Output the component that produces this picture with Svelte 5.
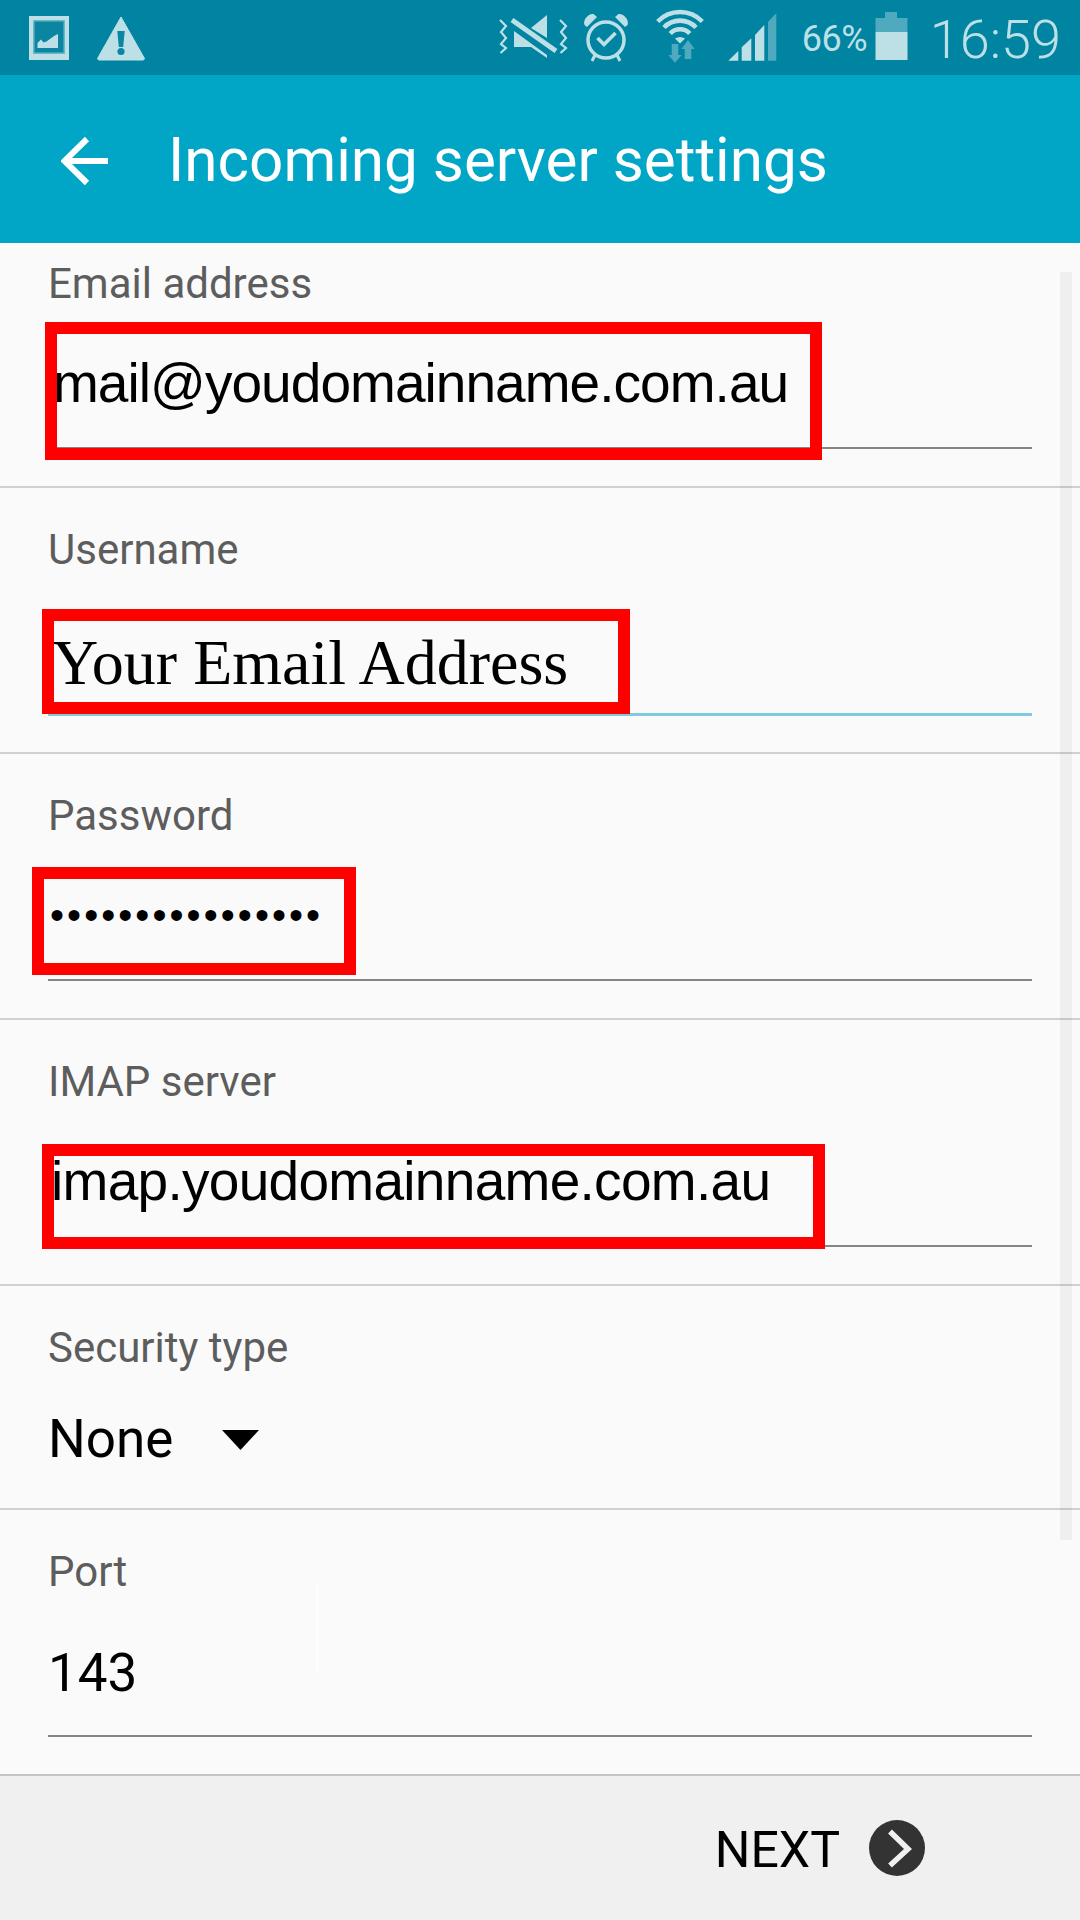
<script>
  const fields = [
    { label: 'Email address', value: 'mail@youdomainname.com.au', kind: 'sans', box: 'box-email', cls: 'first' },
    { label: 'Username', value: 'Your Email Address', kind: 'serif', box: 'box-user', cls: 'focus' },
    { label: 'Password', value: '••••••••••••••••', kind: 'dots', box: 'box-pass', cls: '' },
    { label: 'IMAP server', value: 'imap.youdomainname.com.au', kind: 'sans', box: 'box-imap', cls: 'imap' }
  ];
</script>

<div class="screen">
  <div class="status">
    <div class="status-left">
      <svg class="i-pic" viewBox="29 0 40 75" width="40" height="75">
        <rect x="29" y="16" width="40" height="44" fill="#bde0e7" />
        <rect x="34" y="21" width="30" height="32" fill="#0a86a2" stroke="#4fa9bf" stroke-width="1.5" />
        <path d="M37.500 48v-5l3.500-3.500 2.500 3 3-1 7.500-5.500 4-2v14z" fill="#bde0e7" />
      </svg>
      <svg class="i-warn" viewBox="97 0 48 75" width="48" height="75">
        <path d="M121 17 144.500 58.500 143.500 60H98.500L97.500 58.500z" fill="#bde0e7" stroke="#bde0e7" stroke-linejoin="round" />
        <path d="M117.300 31h7.400l-1.500 16h-4.400z" fill="#0a86a2" />
        <circle cx="121" cy="51.500" r="3.600" fill="#0a86a2" />
      </svg>
    </div>
    <div class="status-right">
      <svg class="i-mute" viewBox="499 0 71 75" width="71" height="75">
        <g fill="none" stroke="#bde0e7" stroke-width="2.200">
          <path d="M501 20l6 6-5 6 5 6-5 6 5 4-5.500 5" />
          <path d="M561 20l6 6-5 6 5 6-5 6 5 4-5.500 5" />
        </g>
        <path d="M532 28 548 15V38z" fill="#bde0e7" />
        <path d="M515 31 548 55V58L532 47H515z" fill="#bde0e7" />
        <path d="M513 20 557 51" stroke="#bde0e7" stroke-width="5" fill="none" />
      </svg>
      <svg class="i-alarm" viewBox="584 0 44 75" width="44" height="75">
        <circle cx="606" cy="40" r="18" fill="none" stroke="#bde0e7" stroke-width="3.500" />
        <path d="M584.500 25c-2-5 4-12 9-11l3.500 3-10 10z" fill="#bde0e7" />
        <path d="M627.500 25c2-5-4-12-9-11l-3.500 3 10 10z" fill="#bde0e7" />
        <path d="M595 55l-3 6M617 55l3 6" stroke="#bde0e7" stroke-width="3" />
        <path d="M597.500 38l6.500 6.500 11.500-11.500" fill="none" stroke="#bde0e7" stroke-width="3.600" />
      </svg>
      <svg class="i-wifi" viewBox="656 0 50 75" width="50" height="75">
        <g fill="none" stroke="#bde0e7" stroke-width="4.600">
          <path d="M658.700 21.500a31 31 0 0 1 44.600 0" />
          <path d="M665 27.500a22 22 0 0 1 32 0" />
          <path d="M671.200 33.500a13.500 13.500 0 0 1 19.600 0" />
        </g>
        <path d="M676 38.500q5-3 10 0l-5 5z" fill="#bde0e7" />
        <path d="M672.700 44h6.600v11h3.400l-6.700 7.700-6.700-7.700h3.400z" fill="#4fa9bf" />
        <path d="M685.700 59h6.600V49h3.400L689 40l-6.700 9h3.400z" fill="#4fa9bf" />
      </svg>
      <svg class="i-signal" viewBox="729 0 49 75" width="49" height="75">
        <path d="M729.300 60.700 739.300 51V60.700z" fill="#bde0e7" />
        <path d="M742.700 47.300 752.300 38.300V60.700H742.700z" fill="#bde0e7" />
        <path d="M756 35 765.300 25V60.700H756z" fill="#bde0e7" />
        <path d="M769 21.700 777.300 13.300V60.700H769z" fill="#4fa9bf" />
      </svg>
      <span class="pct">66%</span>
      <svg class="i-batt" viewBox="876 0 33 75" width="33" height="75">
        <path d="M886 12h12v6h10.500v14H876.500V18H886z" fill="#4fa9bf" />
        <rect x="876.500" y="32" width="32" height="28" fill="#bde0e7" />
      </svg>
      <span class="time">16:59</span>
    </div>
  </div>

  <header class="appbar">
    <svg class="back" viewBox="0 0 48 50" width="48" height="50">
      <path d="M47 25H4M26 3 3.500 25 26 47" fill="none" stroke="#fff" stroke-width="6" />
    </svg>
    <h1>Incoming server settings</h1>
  </header>

  <main class="form">
    {#each fields as f}
      <section class="row {f.cls}">
        <div class="label">{f.label}</div>
        <div class="field {f.kind}">{f.value}</div>
        <div class="redbox {f.box}"></div>
      </section>
    {/each}

    <section class="row security">
      <div class="label">Security type</div>
      <div class="select">
        <span>None</span>
        <svg viewBox="0 0 37 20" width="37" height="20"><path d="M0 0H37L18.500 20z" fill="#000" /></svg>
      </div>
    </section>

    <section class="row port">
      <div class="label">Port</div>
      <div class="field plain">143</div>
      <div class="hair"></div>
    </section>
    <div class="scrollbar"></div>
  </main>

  <footer class="bottom">
    <span class="next">NEXT</span>
    <svg viewBox="0 0 56 56" width="56" height="56">
      <circle cx="28" cy="28" r="28" fill="#333" />
      <path d="M21 11.500 39 29 21 45.500" fill="none" stroke="#f0f0f0" stroke-width="5.500" />
    </svg>
  </footer>
</div>

<style>
  :global(body) { margin: 0; background: #fafafa; }
  .screen { width: 1080px; height: 1920px; display: flex; flex-direction: column; overflow: hidden; font-family: Roboto, sans-serif; background: #fafafa; }

  .status { height: 75px; flex: none; background: #0084a1; display: flex; justify-content: space-between; }
  .status-left, .status-right { display: flex; align-items: flex-start; }
  .status-left { padding-left: 29px; }
  .status-right { padding-right: 19px; }
  .i-warn { margin-left: 28px; }
  .i-alarm { margin-left: 15px; }
  .i-wifi { margin-left: 27px; }
  .i-signal { margin-left: 23px; }
  .pct { margin: 2px 0 0 25px; width: 73px; font-size: 36px; line-height: 75px; color: #bde0e7; letter-spacing: -0.5px; }
  .time { margin: 2px 0 0 22px; font-size: 54px; font-weight: 300; line-height: 75px; color: #bde0e7; }

  .appbar { height: 168px; flex: none; background: #01a6c7; display: flex; align-items: center; padding-top: 4px; box-sizing: border-box; }
  .back { margin-left: 61px; flex: none; }
  h1 { margin: 0 0 0 59px; font-size: 60.2px; font-weight: 400; color: #fff; line-height: 1; }

  .form { position: relative; flex: 1; overflow: hidden; }
  .row { position: relative; height: 266px; box-sizing: border-box; border-bottom: 2px solid #d0d0d0; padding: 37px 0 0 48px; }
  .row.first { margin-top: -21px; }
  .label { font-size: 42px; line-height: 50px; color: #5d5d5d; }

  .field { margin-right: 48px; padding-left: 5px; box-sizing: content-box; border-bottom: 2px solid #858585; color: #000; white-space: nowrap; }
  .sans { font-family: "Liberation Sans", Arial, sans-serif; font-size: 55px; letter-spacing: -0.95px; line-height: 70px; height: 99px; padding-top: 39px; }
  .imap .sans { padding-left: 3px; letter-spacing: -0.7px; }
  .serif { font-family: "Liberation Serif", "Times New Roman", serif; font-size: 64px; line-height: 70px; height: 85px; padding-top: 53px; padding-left: 4px; }
  .dots { font-family: "Liberation Sans", Arial, sans-serif; font-size: 40px; line-height: 50px; letter-spacing: 3.070px; height: 89px; padding-top: 49px; padding-left: 2px; }
  .plain { font-size: 53px; line-height: 70px; height: 97px; padding-top: 41px; padding-left: 0; }
  .focus .field { border-bottom: 3px solid #7fcbdc; }
  .port { border-bottom-color: #c4c4c4; }

  .security { height: 224px; }
  .select { display: flex; align-items: center; gap: 49px; font-size: 53px; line-height: 70px; color: #000; padding-top: 31px; }
  .select svg { margin-top: 2px; }

  .redbox { position: absolute; box-sizing: border-box; border: 12px solid #f00; }
  .box-email { left: 45px; top: 100px; width: 777px; height: 138px; }
  .box-user { left: 42px; top: 121px; width: 588px; height: 105px; }
  .box-pass { left: 32px; top: 113px; width: 324px; height: 108px; }
  .box-imap { left: 42px; top: 124px; width: 783px; height: 105px; }

  .scrollbar { position: absolute; left: 1060px; top: 29px; width: 12px; height: 1268px; background: rgba(0,0,0,0.045); }
  .hair { position: absolute; left: 317px; top: 70px; width: 1px; height: 96px; background: #fff; }

  .bottom { height: 144px; flex: none; background: #f0f0f0; display: flex; align-items: center; justify-content: flex-end; padding-right: 155px; box-sizing: border-box; gap: 29px; }
  .next { font-size: 50px; color: #000; margin-top: 3px; }
</style>
